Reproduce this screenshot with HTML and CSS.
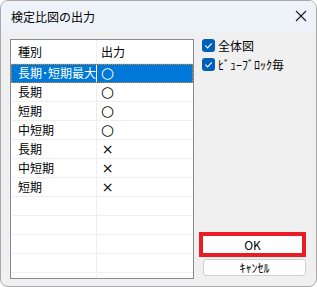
FILE: index.html
```html
<!DOCTYPE html>
<html lang="ja">

<head>
    <meta charset="UTF-8">
    <meta name="viewport" content="width=device-width, initial-scale=1.0">
    <title>検定比図の出力</title>
    <link rel="stylesheet" href="styles.css">
</head>

<body>
    <div class="window">
        <div class="titlebar">
            <span class="title">検定比図の出力</span>
            <svg class="close" width="12" height="12" viewBox="0 0 12 12">
                <path d="M1 1L11 11M11 1L1 11" stroke="#1a1a1a" stroke-width="1.1" fill="none" />
            </svg>
        </div>

        <div class="content">
            <div class="list">
                <div class="row header">
                    <div class="cell kind">種別</div>
                    <div class="cell out">出力</div>
                </div>
                <div class="row selected">
                    <div class="cell kind">長期･短期最大</div>
                    <div class="cell out"><span class="mark o">○</span></div>
                </div>
                <div class="row">
                    <div class="cell kind">長期</div>
                    <div class="cell out"><span class="mark o">○</span></div>
                </div>
                <div class="row">
                    <div class="cell kind">短期</div>
                    <div class="cell out"><span class="mark o">○</span></div>
                </div>
                <div class="row">
                    <div class="cell kind">中短期</div>
                    <div class="cell out"><span class="mark o">○</span></div>
                </div>
                <div class="row">
                    <div class="cell kind">長期</div>
                    <div class="cell out"><span class="mark x">×</span></div>
                </div>
                <div class="row">
                    <div class="cell kind">中短期</div>
                    <div class="cell out"><span class="mark x">×</span></div>
                </div>
                <div class="row">
                    <div class="cell kind">短期</div>
                    <div class="cell out"><span class="mark x">×</span></div>
                </div>
                <div class="row"><div class="cell kind"></div><div class="cell out"></div></div>
                <div class="row"><div class="cell kind"></div><div class="cell out"></div></div>
                <div class="row"><div class="cell kind"></div><div class="cell out"></div></div>
                <div class="row"><div class="cell kind"></div><div class="cell out"></div></div>
                <div class="row"><div class="cell kind"></div><div class="cell out"></div></div>
            </div>

            <div class="side">
                <label class="check">
                    <span class="box">
                        <svg width="9" height="9" viewBox="0 0 10 10">
                            <path d="M1.5 5.2L4 7.6L8.6 2.6" stroke="#fff" stroke-width="1.3" fill="none" />
                        </svg>
                    </span>
                    全体図
                </label>
                <label class="check">
                    <span class="box">
                        <svg width="9" height="9" viewBox="0 0 10 10">
                            <path d="M1.5 5.2L4 7.6L8.6 2.6" stroke="#fff" stroke-width="1.3" fill="none" />
                        </svg>
                    </span>
                    ﾋﾞｭｰﾌﾞﾛｯｸ毎
                </label>

                <div class="buttons">
                    <div class="highlight">
                        <button class="btn ok">OK</button>
                    </div>
                    <button class="btn cancel">ｷｬﾝｾﾙ</button>
                </div>
            </div>
        </div>
    </div>
</body>

</html>
```

FILE: styles.css
```css
* {
    margin: 0;
    padding: 0;
    box-sizing: border-box;
}

html,
body {
    background: #ffffff;
}

body {
    font-family: "Noto Sans CJK JP", "Noto Sans", sans-serif;
    font-size: 12px;
    color: #000;
}

.window {
    width: 317px;
    height: 287px;
    border: 1px solid #a9a9a9;
    border-radius: 8px;
    overflow: hidden;
    background: #f0f0f0;
}

.titlebar {
    height: 30px;
    background: #eef3f9;
    display: flex;
    align-items: center;
    justify-content: space-between;
    padding: 0 9px 0 10px;
}

.title {
    font-size: 12px;
    line-height: 1;
    padding-top: 1px;
}

.content {
    display: flex;
    gap: 5px;
    padding: 8px 0 0 9px;
}

/* 一覧 */
.list {
    width: 184px;
    height: 240px;
    border: 1px solid #868a94;
    background: #fff;
    overflow: hidden;
}

.row {
    display: flex;
    height: 19px;
    border-bottom: 1px solid #efefef;
    margin-left: 1px;
}

.row.header {
    height: 24px;
    margin-left: 0;
    padding-left: 1px;
}

.cell {
    display: flex;
    align-items: center;
    line-height: 1;
}

.kind {
    width: 85px;
    padding-left: 6px;
    border-right: 1px solid #efefef;
}

.out {
    flex: 1;
    padding-left: 4px;
}

.mark {
    font-family: "DejaVu Sans", sans-serif;
    width: 13px;
    text-align: center;
}

.mark.o {
    font-size: 15px;
}

.mark.x {
    font-size: 14px;
}

.header .cell {
    padding-top: 1px;
}

.row.selected {
    margin-left: 0;
    padding-left: 1px;
    background: #0078d7;
    color: #fff;
    outline: 1px dotted #e08a1a;
    outline-offset: -1px;
    border-bottom-color: #0078d7;
}

.selected .kind {
    border-right-color: #ffffff;
}

/* 右側 */
.side {
    width: 108px;
    height: 240px;
    display: flex;
    flex-direction: column;
}

.check {
    display: flex;
    align-items: center;
    gap: 3px;
    height: 13px;
    margin-left: 3px;
    margin-bottom: 6px;
    line-height: 1;
}

.box {
    width: 13px;
    height: 13px;
    border-radius: 3px;
    background: #005fb8;
    display: flex;
    align-items: center;
    justify-content: center;
}

.buttons {
    margin-top: auto;
    margin-bottom: 3px;
    display: flex;
    flex-direction: column;
    gap: 2px;
}

.highlight {
    width: 107px;
    height: 25px;
    border: 4px solid #ea1c24;
}

.btn {
    font-family: "Noto Sans CJK JP", "Noto Sans", sans-serif;
    font-size: 12px;
    line-height: 1;
    color: #000;
    background: #fdfdfd;
    display: flex;
    align-items: center;
    justify-content: center;
    cursor: pointer;
}

.ok {
    width: 100%;
    height: 100%;
    border: none;
    background: #fff;
}

.cancel {
    width: 103px;
    height: 17px;
    margin-left: 4px;
    border: 1px solid #d0d0d0;
    border-radius: 3px;
}
```
